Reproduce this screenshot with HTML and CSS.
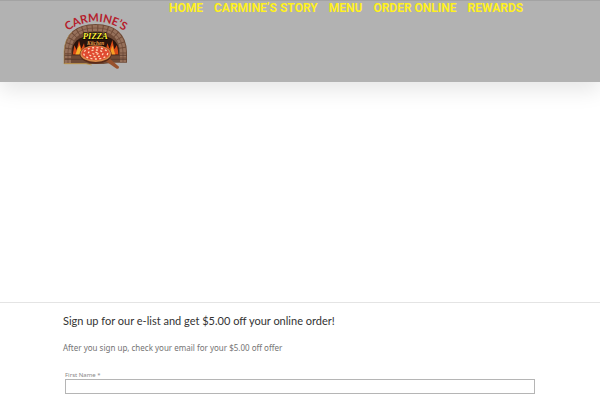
FILE: index.html
```
<!DOCTYPE html>
<html lang="en">

<head>
    <meta charset="UTF-8">
    <meta name="viewport" content="width=device-width, initial-scale=1.0">
    <link rel="stylesheet" href="styles.css">
    <title>Carmine's Pizza Kitchen</title>
</head>

<body>
    <header class="header">
        <a class="logo" href="#" aria-label="Carmine's Pizza Kitchen">
            <svg viewBox="39 24 195 186" width="65" height="62">
                <defs>
                    <path id="arc" d="M46 97 Q138 33 230 97" />
                    <clipPath id="oven">
                        <path d="M67 164 V144 Q76 106 138 106 Q196 106 206 144 V164 Z" />
                    </clipPath>
                </defs>
                <!-- brick arch -->
                <path d="M42 192 V156 Q44 74 137 72 Q228 74 231 156 V188 H188 L160 192 Z" fill="#6f4a36" />
                <path d="M54 190 V156 Q58 84 137 84 Q215 84 219 156 V186" fill="none" stroke="#96705a" stroke-width="18" stroke-dasharray="12 3" />
                <path d="M54 190 V156 Q58 84 137 84 Q215 84 219 156 V186" fill="none" stroke="#6a4736" stroke-width="2" />
                <path d="M43 166 H90 M43 178 H98 M180 166 H230 M180 178 H230" stroke="#4d3226" stroke-width="2" />
                <path d="M42 192 V154 Q44 118 66 96" fill="none" stroke="#b08f58" stroke-width="2" />
                <path d="M43 191 H108 L125 195" fill="none" stroke="#c09a50" stroke-width="3" />
                <path d="M67 164 V144 Q76 106 138 106 Q196 106 206 144 V164 Z" fill="#2a140d" />
                <!-- fire -->
                <g clip-path="url(#oven)">
                    <path d="M68 164 L73 136 L80 150 L87 122 L94 146 L102 130 L108 164 Z" fill="#d94b17" />
                    <path d="M76 164 L83 145 L89 135 L96 164 Z" fill="#f6b02b" />
                    <path d="M164 164 L172 130 L179 146 L187 120 L193 148 L201 135 L206 164 Z" fill="#d94b17" />
                    <path d="M178 164 L187 136 L196 164 Z" fill="#f6a027" />
                </g>
                <!-- pizza on the peel -->
                <path d="M163 181 L178 175 L207 200 Q208 208 200 206 Z" fill="#98512c" />
                <ellipse cx="137" cy="163" rx="48" ry="28" fill="#5a2a18" />
                <ellipse cx="137" cy="161" rx="46" ry="25" fill="#d98a4a" />
                <ellipse cx="137" cy="160" rx="42" ry="21" fill="#e04a31" />
                <g fill="none" stroke="#ffd9b8" stroke-width="4" stroke-dasharray="6 7">
                    <ellipse cx="137" cy="160" rx="36" ry="17" />
                    <ellipse cx="137" cy="160" rx="22" ry="10" />
                    <ellipse cx="137" cy="160" rx="8" ry="3" />
                </g>
                <text class="logo-name">
                    <textPath href="#arc" startOffset="50%" text-anchor="middle">CARMINE’S</textPath>
                </text>
                <text class="logo-pizza" x="136" y="116" text-anchor="middle">PIZZA</text>
                <text class="logo-kitchen" x="137" y="136" text-anchor="middle">Kitchen</text>
            </svg>
        </a>
        <nav class="nav">
            <a href="#">HOME</a>
            <a href="#">CARMINE’S STORY</a>
            <a href="#">MENU</a>
            <a href="#">ORDER ONLINE</a>
            <a href="#">REWARDS</a>
        </nav>
    </header>
    <main class="slider"></main>
    <section class="signup">
        <h2>Sign up for our e-list and get $5.00 off your online order!</h2>
        <p>After you sign up, check your email for your $5.00 off offer</p>
        <form class="form">
            <label for="first-name">First Name *</label>
            <input type="text" id="first-name" name="first-name">
        </form>
    </section>
</body>

</html>
```
FILE: styles.css
```
* {
    margin: 0;
    padding: 0;
    box-sizing: border-box;
}

body {
    background: white;
    font-family: "Noto Sans", sans-serif;
    overflow-x: hidden;
}

.header {
    display: flex;
    align-items: flex-start;
    gap: 41px;
    padding: 0 10.5% 12px;
    background: #b2b2b2;
    border-top: 1px solid #a3a3a3;
    box-shadow: 0 8px 20px rgba(0, 0, 0, 0.1);
}

.logo {
    padding-top: 7px;
}

.logo svg {
    display: block;
    overflow: visible;
}

.logo-name {
    font-family: Lato, sans-serif;
    font-size: 34px;
    font-weight: 700;
    fill: #b5202c;
}

.logo-pizza {
    font-family: "Liberation Serif", serif;
    font-size: 26px;
    font-weight: bold;
    font-style: italic;
    fill: #fff23a;
    stroke: black;
    stroke-width: 3px;
    paint-order: stroke;
}

.logo-kitchen {
    font-family: "Liberation Serif", serif;
    font-size: 16px;
    font-weight: bold;
    font-style: italic;
    fill: #f0a04a;
    stroke: #1d0e09;
    stroke-width: 2px;
    paint-order: stroke;
}

.nav {
    display: flex;
    gap: 11px;
}

.nav a {
    color: #fff01e;
    font-family: Roboto, sans-serif;
    font-size: 12px;
    font-weight: 700;
    line-height: 14px;
    text-decoration: none;
    white-space: nowrap;
}

.slider {
    height: 220px;
}

.signup {
    padding: 8px 10.5%;
    border-top: 1px solid #e4e4e4;
}

.signup h2 {
    color: #333;
    font-family: Lato, sans-serif;
    font-size: 11px;
    font-weight: 400;
    line-height: 20px;
}

.signup p {
    margin-top: 11px;
    color: #747474;
    font-size: 8px;
    line-height: 12px;
}

.form {
    display: flex;
    flex-direction: column;
    padding: 17px 2px;
}

.form label {
    color: #888;
    font-size: 6px;
    line-height: 8px;
}

.form input {
    width: 100%;
    height: 15px;
    border: 1px solid #b5b5b5;
}
```
